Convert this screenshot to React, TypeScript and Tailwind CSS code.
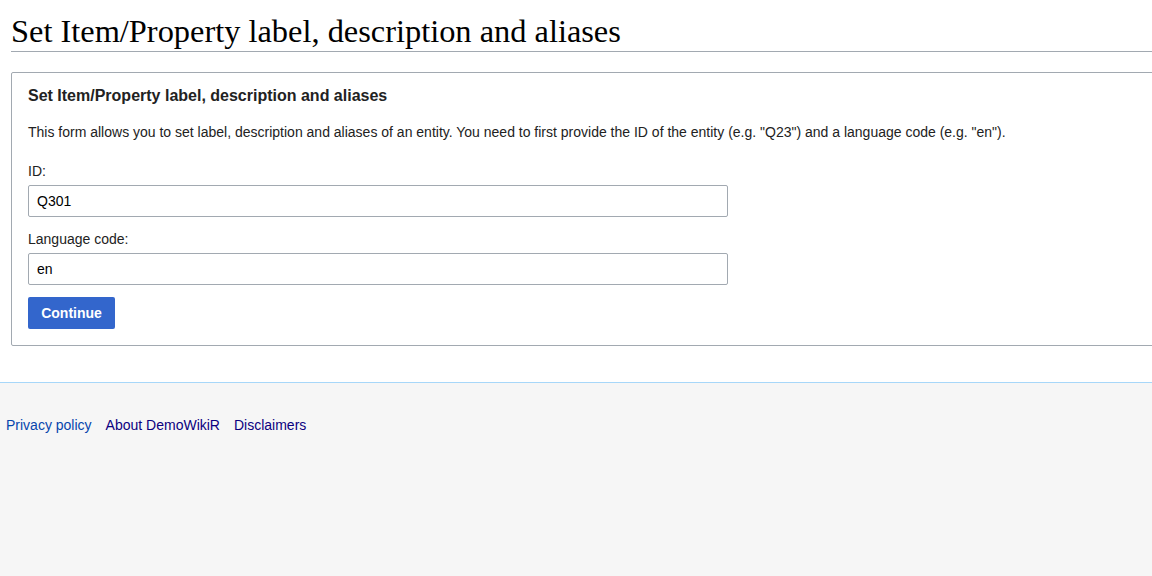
import React from "react";

export default function App() {
  return (
    <div className="min-h-[576px] w-full overflow-hidden bg-[#f6f6f6] font-['Liberation_Sans',Arial,sans-serif] text-[#222222]">
      <div className="bg-white pt-[12px] pb-[36px] pl-[11px]">
        <h1 className="border-b border-[#a2a9b1] pb-px font-['Liberation_Serif','Times_New_Roman',serif] text-[32.4px] leading-[38px] text-black">
          Set Item/Property label, description and aliases
        </h1>
        <div className="mt-[20px] -mr-[20px] rounded-[2px] border border-[#a2a9b1] px-[16px] pt-[13px] pb-[16px]">
          <div className="text-[16px] font-bold leading-[20px] text-[#222222]">
            Set Item/Property label, description and aliases
          </div>
          <p className="mt-[16px] text-[14px] leading-[20px]">
            This form allows you to set label, description and aliases of an entity. You need to first provide the ID of the entity (e.g. "Q23") and a language code (e.g. "en").
          </p>
          <div className="mt-[19px] text-[14px] leading-[20px]">ID:</div>
          <input
            readOnly
            value="Q301"
            className="mt-[4px] block h-[32px] w-[700px] rounded-[2px] border border-[#a2a9b1] bg-white px-[8px] text-[14px] text-black outline-none"
          />
          <div className="mt-[12px] text-[14px] leading-[20px]">Language code:</div>
          <input
            readOnly
            value="en"
            className="mt-[4px] block h-[32px] w-[700px] rounded-[2px] border border-[#a2a9b1] bg-white px-[8px] text-[14px] text-black outline-none"
          />
          <button className="mt-[12px] block h-[32px] w-[87px] rounded-[2px] bg-[#3366cc] text-[14px] font-bold text-white">
            Continue
          </button>
        </div>
      </div>
      <div className="border-t border-[#a7d7f9] px-[6px] pt-[32px]">
        <div className="flex gap-[14px] text-[14px] leading-[20px]">
          <a className="text-[#0645ad]">Privacy policy</a>
          <a className="text-[#0b0080]">About DemoWikiR</a>
          <a className="text-[#0b0080]">Disclaimers</a>
        </div>
      </div>
    </div>
  );
}
